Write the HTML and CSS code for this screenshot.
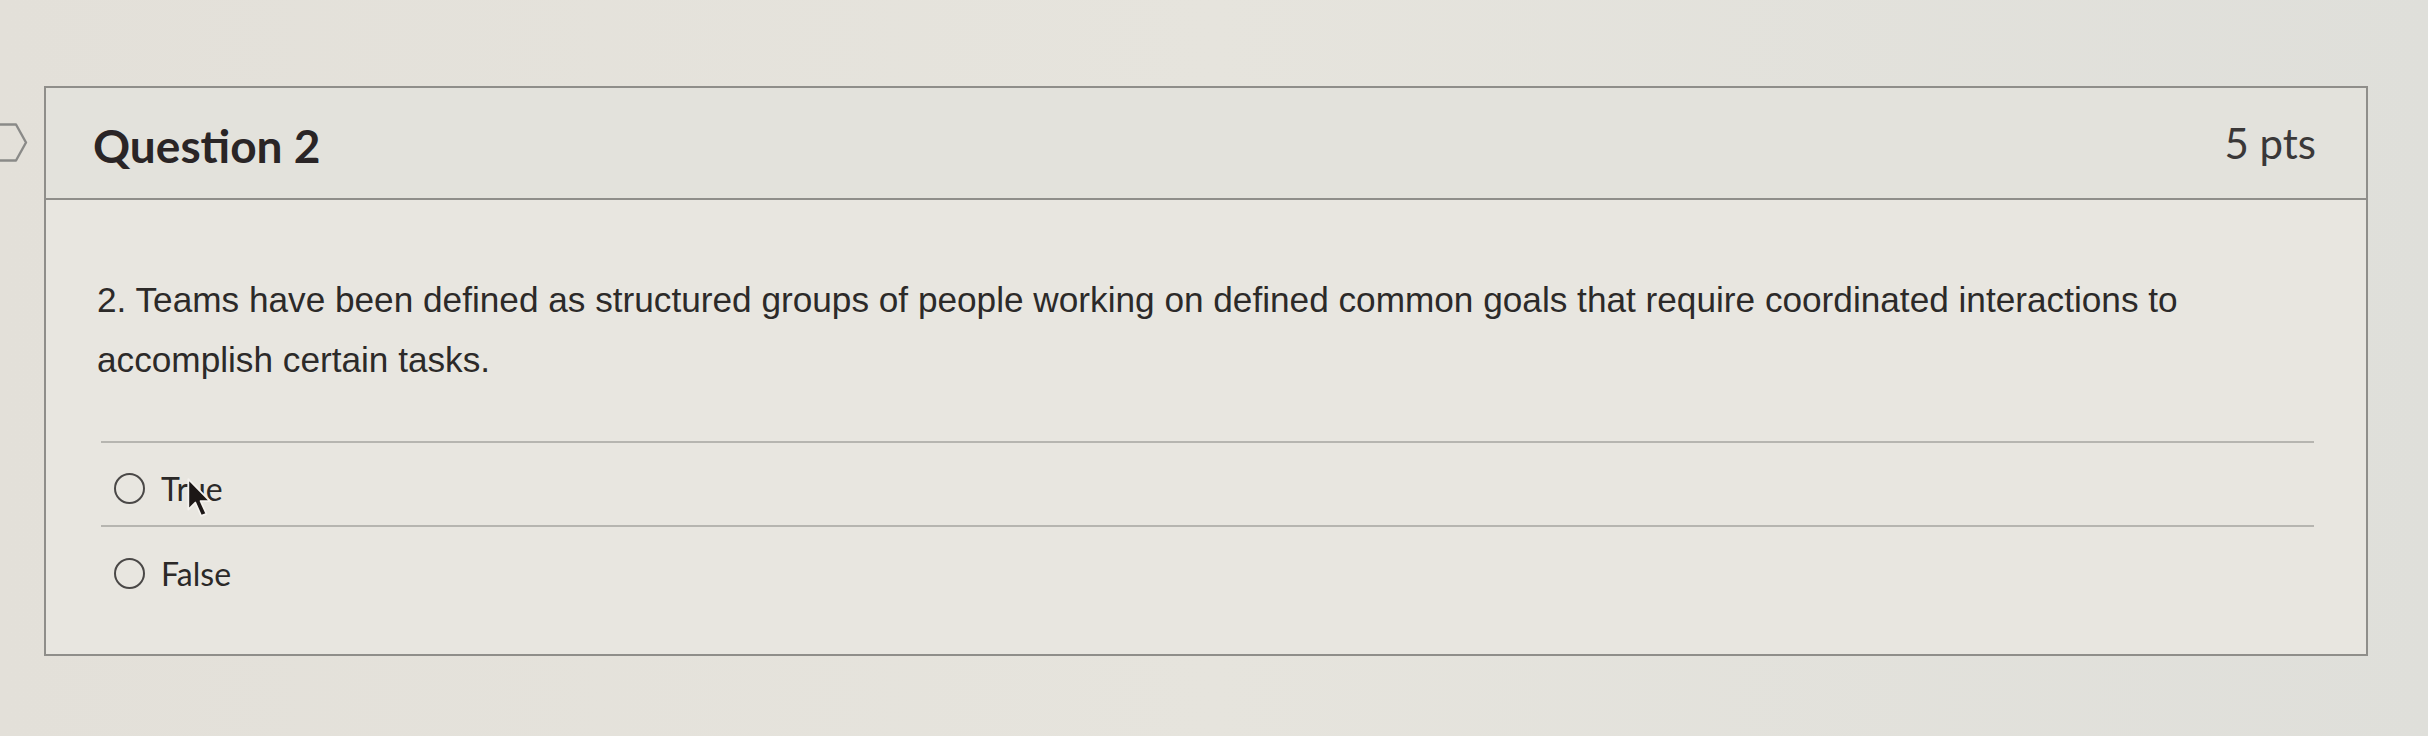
FILE: index.html
```html
<!DOCTYPE html>
<html lang="en">
<head>
<meta charset="utf-8">
<title>Question 2</title>
<link rel="stylesheet" href="styles.css">
</head>
<body>
<div class="page">
  <div class="flag-col">
    <svg class="flag" width="32" height="42" viewBox="0 0 32 42" aria-hidden="true">
      <path d="M-4 2.5 L16 2.5 L26 20.5 L16 38.5 L-4 38.5" fill="none" stroke="#8a8a88" stroke-width="2.4" stroke-linejoin="round"/>
    </svg>
  </div>
  <div class="question">
    <div class="q-header">
      <h2 class="q-title">Question 2</h2>
      <div class="q-pts">5 pts</div>
    </div>
    <div class="q-body">
      <p class="q-text">2. Teams have been defined as structured groups of people working on defined common goals that require coordinated interactions to accomplish certain tasks.</p>
      <div class="answers">
        <label class="answer">
          <span class="radio"></span>
          <span class="answer-label">True
            <svg class="cursor" width="28" height="42" viewBox="0 0 24 36" aria-hidden="true">
              <path d="M2 1 L2 27 L8 21 L13 32.5 L17.5 30.8 L12.5 19.8 L20.5 19.8 Z" fill="#1c1716" stroke="#f4f2ee" stroke-width="1.5" stroke-linejoin="round"/>
            </svg>
          </span>
        </label>
        <label class="answer">
          <span class="radio"></span>
          <span class="answer-label">False</span>
        </label>
      </div>
    </div>
  </div>
</div>
</body>
</html>
```
FILE: styles.css
```css
html, body {
  margin: 0;
  padding: 0;
}
body {
  width: 2428px;
  height: 736px;
  overflow: hidden;
  background: linear-gradient(90deg, #e3e0d9 0%, #e6e4dd 50%, #dfdfda 100%);
}
.page {
  display: flex;
  align-items: flex-start;
  padding-top: 86px;
}
.flag-col {
  width: 44px;
  flex: none;
  padding-top: 36px;
}
.flag {
  display: block;
}
.question {
  width: 2320px;
  border: 2px solid #8f8e8a;
  background: #e8e6e0;
}
.q-header {
  height: 110px;
  display: flex;
  align-items: center;
  justify-content: space-between;
  padding: 0 50px 0 47px;
  background: #e3e2dc;
  border-bottom: 2px solid #8f8e8a;
}
.q-title {
  margin: 0;
  font-family: Lato, "Liberation Sans", sans-serif;
  font-weight: 700;
  font-size: 46px;
  color: #2a2526;
  padding-top: 4px;
}
.q-pts {
  font-family: Lato, "Liberation Sans", sans-serif;
  font-weight: 400;
  font-size: 42px;
  color: #3a3838;
}
.q-body {
  padding: 70px 52px 43px 51px;
}
.q-text {
  margin: 0;
  font-family: "Liberation Sans", Arial, sans-serif;
  font-size: 35.2px;
  line-height: 60px;
  color: #2c2a29;
  max-width: 2150px;
}
.answers {
  margin-top: 51px;
  margin-left: 4px;
  border-top: 2px solid #b6b5b0;
}
.answer {
  display: flex;
  align-items: center;
  height: 82px;
  padding-left: 13px;
  padding-top: 8px;
  box-sizing: border-box;
}
.answer + .answer {
  border-top: 2px solid #b6b5b0;
  height: 86px;
}
.radio {
  width: 27px;
  height: 27px;
  border: 2.5px solid #4a4847;
  border-radius: 50%;
  flex: none;
}
.answer-label {
  position: relative;
  margin-left: 16px;
  font-family: Lato, "Liberation Sans", sans-serif;
  font-size: 32px;
  color: #2b2928;
}
.cursor {
  position: absolute;
  left: 25px;
  top: 9px;
}
```
